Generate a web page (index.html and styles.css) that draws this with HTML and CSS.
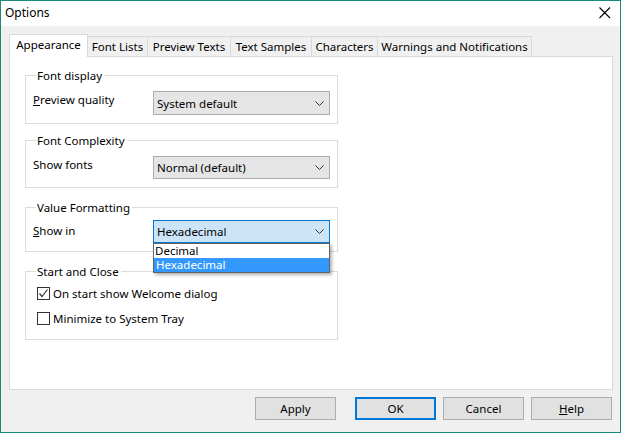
FILE: index.html
```html
<!DOCTYPE html>
<html>
<head>
<meta charset="utf-8">
<link rel="stylesheet" href="styles.css">
</head>
<body>
<div class="window">
  <div class="titlebar">
    <span class="title">Options</span>
    <svg class="close" width="12" height="12" viewBox="0 0 12 12"><path d="M0.5 0.5 L11 11 M11 0.5 L0.5 11" stroke="#000" stroke-width="1.1" fill="none"/></svg>
  </div>
  <div class="body">
    <div class="tabs">
      <div class="tab selected t1">Appearance</div>
      <div class="tab t2">Font Lists</div>
      <div class="tab t3">Preview Texts</div>
      <div class="tab t4">Text Samples</div>
      <div class="tab t5">Characters</div>
      <div class="tab t6">Warnings and Notifications</div>
    </div>
    <div class="panel">
      <div class="group g1">
        <span class="gtitle">Font display</span>
        <div class="row r1">
          <span class="label"><u>P</u>review quality</span>
          <div class="combo"><span>System default</span><svg class="chev" width="9" height="5" viewBox="0 0 9 5"><path d="M0.5 0.5 L4.5 4.5 L8.5 0.5" stroke="#333" fill="none"/></svg></div>
        </div>
      </div>
      <div class="group g2">
        <span class="gtitle">Font Complexity</span>
        <div class="row r2">
          <span class="label">Show fonts</span>
          <div class="combo"><span>Normal (default)</span><svg class="chev" width="9" height="5" viewBox="0 0 9 5"><path d="M0.5 0.5 L4.5 4.5 L8.5 0.5" stroke="#333" fill="none"/></svg></div>
        </div>
      </div>
      <div class="group g3">
        <span class="gtitle">Value Formatting</span>
        <div class="row r3">
          <span class="label"><u>S</u>how in</span>
          <div class="combo focused"><span>Hexadecimal</span><svg class="chev" width="9" height="5" viewBox="0 0 9 5"><path d="M0.5 0.5 L4.5 4.5 L8.5 0.5" stroke="#333" fill="none"/></svg>
            <div class="droplist">
              <div class="opt">Decimal</div>
              <div class="opt hl">Hexadecimal</div>
            </div>
          </div>
        </div>
      </div>
      <div class="group g4">
        <span class="gtitle">Start and Close</span>
        <div class="check c1">
          <span class="box"><svg width="11" height="11" viewBox="0 0 11 11"><path d="M1.5 5.5 L4 8.5 L9.5 1.5" stroke="#333" stroke-width="1.2" fill="none"/></svg></span>
          <span>On start show Welcome dialog</span>
        </div>
        <div class="check c2">
          <span class="box"></span>
          <span>Minimize to System Tray</span>
        </div>
      </div>
    </div>
    <div class="buttons">
      <div class="btn apply">Apply</div>
      <div class="btn ok">OK</div>
      <div class="btn cancel">Cancel</div>
      <div class="btn help"><u>H</u>elp</div>
    </div>
  </div>
</div>
</body>
</html>
```

FILE: styles.css
```css
* { box-sizing: border-box; }
html, body { margin: 0; padding: 0; }
body {
  width: 621px;
  height: 433px;
  font-family: "Noto Sans", "Open Sans", sans-serif;
  font-size: 11.5px;
  color: #000;
  overflow: hidden;
}
.window {
  width: 621px;
  height: 433px;
  border: 1px solid #1b8a7a;
  background: #f0f0f0;
  display: flex;
  flex-direction: column;
}
.titlebar {
  height: 25px;
  background: #fff;
  display: flex;
  align-items: center;
  justify-content: space-between;
  padding: 0 9px 1px 4px;
  flex: none;
}
.title { font-size: 12px; line-height: 16px; }
.close { display: block; margin-top: 0; }
.body {
  flex: 1;
  padding: 8px 8px 0 8px;
}
.tabs {
  display: flex;
  align-items: flex-end;
  height: 22px;
  position: relative;
  z-index: 2;
}
.tab {
  height: 20px;
  border: 1px solid #d9d9d9;
  border-bottom: none;
  background: #f0f0f0;
  margin-left: -1px;
  text-align: center;
  line-height: 19px;
  white-space: nowrap;
}
.tab.selected {
  height: 23px;
  margin-left: 0;
  background: #fff;
  margin-bottom: -1px;
  line-height: 20px;
  padding-bottom: 2px;
}
.t1 { width: 79px; }
.t2 { width: 61px; }
.t3 { width: 84px; }
.t4 { width: 82px; }
.t5 { width: 67px; }
.t6 { width: 155px; }
.panel {
  width: 604px;
  height: 334px;
  background: #fff;
  border: 1px solid #d9d9d9;
  padding: 18px 0 0 15px;
  position: relative;
  z-index: 1;
}
.group {
  width: 313px;
  border: 1px solid #dcdcdc;
  padding: 0 7px;
}
.g1 { height: 49px; }
.g2 { height: 48px; margin-top: 16px; }
.g3 { height: 45px; margin-top: 19px; }
.g4 { height: 69px; margin-top: 19px; }
.gtitle {
  display: block;
  width: max-content;
  background: #fff;
  margin: -8px 0 0 3px;
  padding: 0 2px 0 1px;
  line-height: 15px;
  height: 15px;
}
.row {
  display: flex;
  align-items: flex-start;
}
.r1 { margin-top: 8px; }
.r2 { margin-top: 8px; }
.r3 { margin-top: 5px; }
.label { width: 120px; flex: none; line-height: 15px; padding-top: 1px; }
.r3 .label { padding-top: 3px; }
.combo {
  position: relative;
  width: 177px;
  height: 24px;
  background: #e5e5e5;
  border: 1px solid #adadad;
  display: flex;
  align-items: center;
  justify-content: space-between;
  padding: 0 5px 0 3px;
}
.r2 .combo, .r3 .combo { height: 23px; }
.combo.focused {
  background: #cce4f7;
  border-color: #0078d7;
}
.chev { display: block; }
.droplist {
  position: absolute;
  left: -1px;
  top: 22px;
  width: 177px;
  height: 30px;
  background: #fff;
  border: 1px solid #646464;
  box-shadow: 2px 2px 3px rgba(0,0,0,0.3);
  z-index: 5;
}
.opt {
  height: 14px;
  line-height: 14px;
  padding-left: 1px;
}
.opt.hl {
  background: #3399ff;
  color: #fff;
  padding-left: 2px;
}
.check {
  display: flex;
  align-items: center;
  height: 13px;
  margin-left: 4px;
}
.c1 { margin-top: 8px; }
.c2 { margin-top: 12px; }
.box {
  width: 13px;
  height: 13px;
  border: 1px solid #333;
  background: #fff;
  margin-right: 3px;
  display: flex;
  align-items: center;
  justify-content: center;
  flex: none;
}
.box svg { display: block; }
.buttons {
  display: flex;
  justify-content: flex-end;
  margin-top: 7px;
}
.btn {
  width: 81px;
  height: 23px;
  background: #e1e1e1;
  border: 1px solid #adadad;
  text-align: center;
  line-height: 21px;
}
.apply { margin-right: 19px; }
.ok { border: 2px solid #0078d7; line-height: 19px; margin-right: 7px; }
.cancel { margin-right: 7px; }
```
